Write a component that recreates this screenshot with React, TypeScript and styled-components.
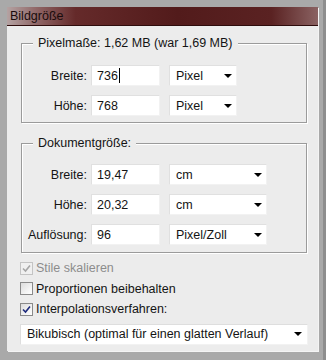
import React from "react";
import styled, { createGlobalStyle } from "styled-components";

const GlobalStyle = createGlobalStyle`
  html, body {
    margin: 0;
    padding: 0;
    background: #a9a9a9;
  }
  * {
    box-sizing: border-box;
  }
`;

function Bildgroesse() {
  return (
    <StyledWindow>
      <StyledPanel>
        <StyledTitleBar>Bildgröße</StyledTitleBar>
        <StyledBody>
          <StyledGroup>
            <StyledLegend>Pixelmaße: 1,62 MB (war 1,69 MB)</StyledLegend>
            <StyledRows $top={14} $bottom={6}>
              <StyledRow>
                <StyledLabel>Breite:</StyledLabel>
                <StyledField>
                  736
                  <StyledTextCursor />
                </StyledField>
                <StyledSelect $width={68}>
                  Pixel
                  <StyledArrow />
                </StyledSelect>
              </StyledRow>
              <StyledRow>
                <StyledLabel>Höhe:</StyledLabel>
                <StyledField>768</StyledField>
                <StyledSelect $width={68}>
                  Pixel
                  <StyledArrow />
                </StyledSelect>
              </StyledRow>
            </StyledRows>
          </StyledGroup>

          <StyledGroup $gap={13}>
            <StyledLegend>Dokumentgröße:</StyledLegend>
            <StyledRows $top={13} $bottom={7}>
              {[
                ["Breite:", "19,47", "cm"],
                ["Höhe:", "20,32", "cm"],
                ["Auflösung:", "96", "Pixel/Zoll"],
              ].map(([label, value, unit]) => (
                <StyledRow key={label}>
                  <StyledLabel>{label}</StyledLabel>
                  <StyledField>{value}</StyledField>
                  <StyledSelect $width={98}>
                    {unit}
                    <StyledArrow />
                  </StyledSelect>
                </StyledRow>
              ))}
            </StyledRows>
          </StyledGroup>

          <StyledOptions>
            <StyledOption $disabled>
              <StyledCheckBox $disabled>
                <CheckMark color="#a6a6a6" />
              </StyledCheckBox>
              Stile skalieren
            </StyledOption>
            <StyledOption>
              <StyledCheckBox />
              Proportionen beibehalten
            </StyledOption>
            <StyledOption>
              <StyledCheckBox>
                <CheckMark color="#1e2b7c" />
              </StyledCheckBox>
              Interpolationsverfahren:
            </StyledOption>
          </StyledOptions>

          <StyledDropdown>
            Bikubisch (optimal für einen glatten Verlauf)
            <StyledArrow />
          </StyledDropdown>
        </StyledBody>
      </StyledPanel>
    </StyledWindow>
  );
}

function CheckMark({ color }: { color: string }) {
  return (
    <svg width="9" height="9" viewBox="0 0 9 9">
      <path
        d="M1 4.5 L3.5 7 L8 1.5"
        fill="none"
        stroke={color}
        strokeWidth="1.6"
      />
    </svg>
  );
}

export default function App() {
  return (
    <>
      <GlobalStyle />
      <Bildgroesse />
    </>
  );
}

const StyledWindow = styled.div`
  width: 326px;
  height: 360px;
  padding: 7px 8px 9px 7px;
  background: #a9a9a9;
  border-right: 3px solid #8e8e8e;
  font-family: "Liberation Sans", Arial, sans-serif;
  font-size: 12.5px;
  color: #141414;
`;

const StyledPanel = styled.div`
  width: 311px;
  height: 344px;
  display: flex;
  flex-direction: column;
  background: #ececec;
  box-shadow: 1px 1px 0 #f4f4f4;
`;

const StyledTitleBar = styled.div`
  height: 19px;
  padding: 1px 0 0 3px;
  line-height: 17px;
  color: #1a0c0c;
  border-bottom: 1px solid #2e0c0c;
  background: linear-gradient(
    90deg,
    #b4a2a2 0%,
    #8e6464 10%,
    #652a2a 22%,
    #521b1b 55%,
    #5a2222 85%,
    #8a6262 100%
  );
`;

const StyledBody = styled.div`
  flex: 1;
  display: flex;
  flex-direction: column;
  padding: 10px 11px 7px 14px;
`;

const StyledGroup = styled.fieldset<{ $gap?: number }>`
  margin: ${(p) => p.$gap || 0}px 0 0 0;
  padding: 0;
  min-width: 0;
  border: 1px solid #9b9b9b;
  box-shadow: 1px 1px 0 #ffffff, inset 1px 1px 0 #ffffff;
`;

const StyledLegend = styled.legend`
  margin-left: 11px;
  padding: 0 5px;
  line-height: 15px;
  background: #ececec;
`;

const StyledRows = styled.div<{ $top: number; $bottom: number }>`
  display: flex;
  flex-direction: column;
  gap: 9px;
  padding: ${(p) => p.$top}px 0 ${(p) => p.$bottom}px 0;
`;

const StyledRow = styled.div`
  display: flex;
  align-items: center;
  height: 21px;
`;

const StyledLabel = styled.div`
  width: 65px;
  margin-right: 4px;
  text-align: right;
`;

const StyledField = styled.div`
  width: 69px;
  height: 21px;
  margin-right: 9px;
  padding-left: 5px;
  display: flex;
  align-items: center;
  background: #ffffff;
  border: 1px solid #e0e0e0;
  border-right-color: #f2f2f2;
  border-bottom-color: #f2f2f2;
`;

const StyledTextCursor = styled.span`
  width: 1px;
  height: 15px;
  margin-left: 1px;
  background: #000000;
`;

const StyledSelect = styled.div<{ $width: number }>`
  width: ${(p) => p.$width}px;
  height: 21px;
  padding: 0 4px 0 6px;
  display: flex;
  align-items: center;
  justify-content: space-between;
  background: #ffffff;
  border: 1px solid #e0e0e0;
  border-right-color: #f2f2f2;
  border-bottom-color: #f2f2f2;
`;

const StyledArrow = styled.span`
  width: 0;
  height: 0;
  border-left: 4px solid transparent;
  border-right: 4px solid transparent;
  border-top: 4px solid #000000;
`;

const StyledOptions = styled.div`
  margin: 5px 0 0 -1px;
  display: flex;
  flex-direction: column;
`;

const StyledOption = styled.div<{ $disabled?: boolean }>`
  height: 20.5px;
  display: flex;
  align-items: center;
  gap: 3px;
  color: ${(p) => (p.$disabled ? "#8c8c8c" : "#141414")};
`;

const StyledCheckBox = styled.span<{ $disabled?: boolean }>`
  width: 13px;
  height: 13px;
  display: flex;
  align-items: center;
  justify-content: center;
  border: 1px solid ${(p) => (p.$disabled ? "#c4c4c4" : "#8a8a8a")};
  background: ${(p) =>
    p.$disabled
      ? "#f0f0f0"
      : "linear-gradient(135deg, #dcdcdc 0%, #f6f6f6 70%, #ffffff 100%)"};
`;

const StyledDropdown = styled.div`
  margin: 4px -1px 0 -1px;
  height: 21px;
  padding: 0 5px 0 6px;
  display: flex;
  align-items: center;
  justify-content: space-between;
  background: #ffffff;
  border: 1px solid #dedede;
  border-right-color: #f2f2f2;
  border-bottom-color: #f2f2f2;
`;
